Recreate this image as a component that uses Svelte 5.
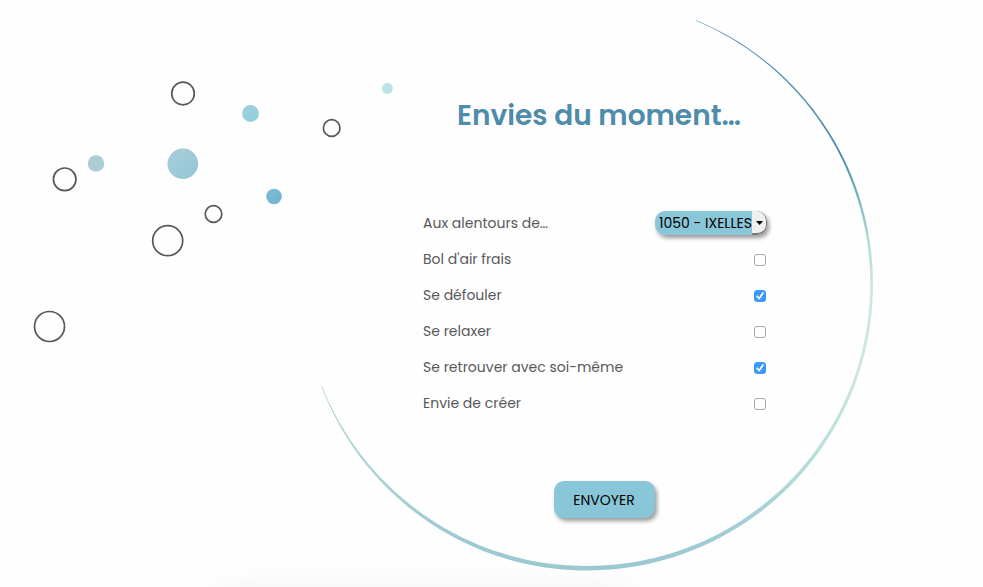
<script>
  const wishes = $state([
    { id: 'air', label: "Bol d'air frais", checked: false },
    { id: 'defouler', label: 'Se défouler', checked: true },
    { id: 'relaxer', label: 'Se relaxer', checked: false },
    { id: 'retrouver', label: 'Se retrouver avec soi-même', checked: true },
    { id: 'creer', label: 'Envie de créer', checked: false }
  ]);
  let town = $state('1050');

  const rings = [
    [183, 93.5, 11.3],
    [331.7, 128, 8.3],
    [64.7, 179.3, 11.3],
    [213.5, 214, 8.3],
    [167.7, 240.7, 15],
    [49.5, 326.5, 15]
  ];
  const dots = [
    [387.3, 88.3, 5.5, '#c3e8e8', '#b2e1e2'],
    [250.5, 113.5, 8.4, '#a0cfdb', '#90d0da'],
    [96, 163.5, 8.3, '#b2ced4', '#a6cdd2'],
    [182.8, 163.8, 15.3, '#a6cdd8', '#94c7d6'],
    [274, 196.5, 7.8, '#7ebbd5', '#6fb2d0']
  ];

  // Brush stroke: [angle in degrees, thickness]
  const stroke = [
    [-67.5, 0.6], [-50, 1.2], [-30, 1.8], [0, 2.8], [20, 3], [45, 3.7],
    [70, 4.3], [90, 4.6], [110, 4.1], [130, 3], [145, 1.8], [159, 0.6]
  ];
  function thickness(a) {
    let i = 1;
    while (i < stroke.length - 1 && a > stroke[i][0]) i++;
    const [a0, t0] = stroke[i - 1];
    const [a1, t1] = stroke[i];
    return t0 + ((a - a0) / (a1 - a0)) * (t1 - t0);
  }
  function radius(a) {
    return a > 110 ? 286 - (a - 110) / 30 : 286;
  }
  function point(a, r) {
    const t = (a * Math.PI) / 180;
    return `${(286 + r * Math.cos(t)).toFixed(2)},${(284.5 + r * Math.sin(t)).toFixed(2)}`;
  }
  function arc(from, to) {
    const outer = [];
    const inner = [];
    const n = 80;
    for (let i = 0; i <= n; i++) {
      const a = from + ((to - from) * i) / n;
      outer.push(point(a, radius(a)));
      inner.unshift(point(a, radius(a) - thickness(a)));
    }
    return 'M' + [...outer, ...inner].join('L') + 'Z';
  }
  const rightArc = arc(-67.5, 90);
  const leftArc = arc(89.8, 159);
</script>

<main>
  <svg class="bubbles" width="400" height="350" viewBox="0 0 400 350" aria-hidden="true">
    <defs>
      {#each dots as d, i}
        <linearGradient id="dot{i}" x1="0" y1="0" x2="1" y2="1">
          <stop offset="0" stop-color={d[3]} />
          <stop offset="1" stop-color={d[4]} />
        </linearGradient>
      {/each}
    </defs>
    {#each rings as [x, y, r]}
      <circle cx={x} cy={y} {r} fill="none" stroke="#58585a" stroke-width="1.7" />
    {/each}
    {#each dots as [x, y, r], i}
      <circle cx={x} cy={y} {r} fill="url(#dot{i})" />
    {/each}
  </svg>

  <div class="shade"></div>

  <section>
    <svg class="circle" width="574" height="574" viewBox="0 0 574 574" aria-hidden="true">
      <defs>
        <linearGradient id="right" gradientUnits="userSpaceOnUse" x1="0" y1="0" x2="0" y2="571">
          <stop offset="0.03" stop-color="#5a93b6" />
          <stop offset="0.27" stop-color="#4f8bab" />
          <stop offset="0.34" stop-color="#70b0bb" />
          <stop offset="0.42" stop-color="#b2dbd4" />
          <stop offset="0.5" stop-color="#cce8df" />
          <stop offset="0.66" stop-color="#cbe7df" />
          <stop offset="0.8" stop-color="#b9dedb" />
          <stop offset="0.9" stop-color="#a5d0d7" />
          <stop offset="1" stop-color="#9bc7d0" />
        </linearGradient>
        <linearGradient id="left" gradientUnits="userSpaceOnUse" x1="0" y1="387" x2="0" y2="571">
          <stop offset="0" stop-color="#add2d1" />
          <stop offset="0.5" stop-color="#a8d1d5" />
          <stop offset="1" stop-color="#9bc7d0" />
        </linearGradient>
      </defs>
      <path d={leftArc} fill="url(#left)" />
      <path d={rightArc} fill="url(#right)" />
    </svg>

    <form onsubmit={(e) => e.preventDefault()}>
      <h1>Envies du moment…</h1>
      <div class="rows">
        <div class="row">
          <label for="town">Aux alentours de…</label>
          <span class="select">
            <select id="town" bind:value={town}>
              <option value="1050">1050 - IXELLES</option>
            </select>
            <span class="arrow">
              <svg width="7" height="4" viewBox="0 0 7 4"><path d="M0 0h7L3.5 4z" /></svg>
            </span>
          </span>
        </div>
        {#each wishes as wish}
          <div class="row">
            <label for={wish.id}>{wish.label}</label>
            <input type="checkbox" id={wish.id} bind:checked={wish.checked} />
          </div>
        {/each}
      </div>
      <button type="submit">ENVOYER</button>
    </form>
  </section>
</main>

<style>
  :global(body) {
    margin: 0;
    background: #fefefe;
  }
  main {
    position: relative;
    display: flex;
    justify-content: flex-end;
    min-height: 100vh;
    box-sizing: border-box;
    padding-right: 108px;
    overflow: hidden;
    font-family: Poppins, Inter, sans-serif;
    color: #58585a;
  }
  .bubbles {
    position: absolute;
    left: 0;
    top: 0;
  }
  .shade {
    position: absolute;
    left: 216px;
    right: 356px;
    bottom: -30px;
    height: 20px;
    box-shadow: 0 0 34px rgba(0, 0, 0, 0.09);
  }
  section {
    position: relative;
    width: 574px;
  }
  .circle {
    position: absolute;
    left: 0;
    top: 0;
  }
  form {
    position: relative;
    display: flex;
    flex-direction: column;
    align-items: center;
    padding: 92px 108px 64px 122px;
  }
  h1 {
    margin: 0;
    padding-left: 8px;
    font-size: 28px;
    line-height: 48px;
    font-weight: 600;
    color: #4f8bab;
    white-space: nowrap;
  }
  .rows {
    width: 100%;
    margin-top: 65px;
  }
  .row {
    display: flex;
    align-items: center;
    justify-content: space-between;
    height: 36px;
    font-size: 14px;
    line-height: 20px;
  }
  .select {
    position: relative;
    display: flex;
    height: 24px;
    border-radius: 10px;
    box-shadow: 2px 3px 4px rgba(0, 0, 0, 0.4);
    overflow: hidden;
  }
  select {
    appearance: none;
    width: 112px;
    height: 24px;
    margin: 0;
    padding: 0 0 0 4px;
    border: 0;
    background: #88c6d8;
    color: #000;
    font-family: inherit;
    font-size: 14px;
  }
  .arrow {
    position: absolute;
    right: 0;
    top: 0;
    display: flex;
    align-items: center;
    justify-content: center;
    box-sizing: border-box;
    width: 15px;
    height: 24px;
    border: solid #777;
    border-width: 0 1px 2px 0;
    border-radius: 0 10px 10px 0;
    background: #efefef;
    pointer-events: none;
  }
  .arrow svg {
    margin-top: 2px;
  }
  input {
    appearance: none;
    display: grid;
    place-items: center;
    box-sizing: border-box;
    width: 12px;
    height: 12px;
    margin: 2px 1px 0 0;
    border: 1px solid #a6a6a6;
    border-radius: 3px;
    background: #fff;
  }
  input:checked {
    border-color: #3b99fc;
    background: #3b99fc;
  }
  input:checked::before {
    content: '';
    width: 8px;
    height: 8px;
    background: #fff;
    clip-path: polygon(0 55%, 16% 40%, 38% 66%, 82% 0, 100% 14%, 42% 98%);
  }
  button {
    width: 101px;
    height: 37px;
    margin: 60px 0 0 18px;
    padding: 2px 0 0;
    border: 0;
    border-radius: 10px;
    background: #88c6d8;
    box-shadow: 2px 3px 4px rgba(0, 0, 0, 0.4);
    color: #000;
    font-family: inherit;
    font-size: 14px;
  }
</style>
